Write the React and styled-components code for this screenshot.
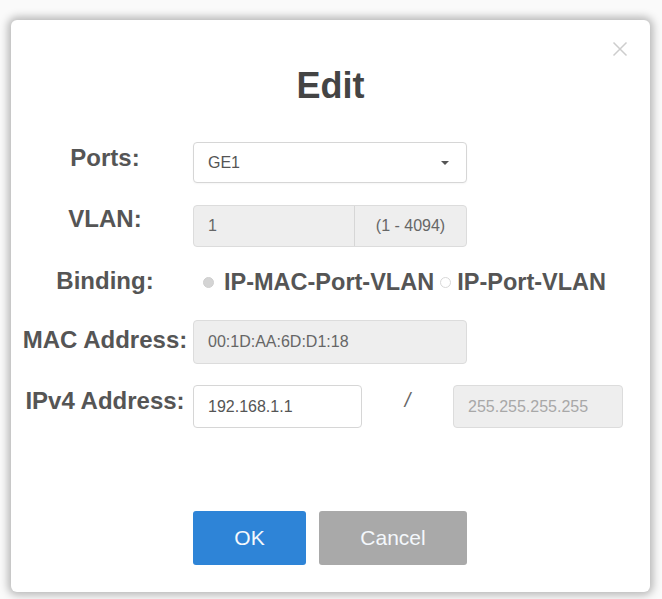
import React from "react";
import styled, { createGlobalStyle } from "styled-components";

const GlobalStyle = createGlobalStyle`
  html, body { margin: 0; padding: 0; }
  body {
    background: #fafafa;
    font-family: "Liberation Sans", Arial, sans-serif;
  }
  * { box-sizing: border-box; }
`;

const Page = styled.div`
  width: 662px;
  height: 599px;
  padding: 20px 12px 7px 11px;
  overflow: hidden;
`;

const Modal = styled.div`
  position: relative;
  width: 639px;
  height: 572px;
  background: #fff;
  border-radius: 6px;
  box-shadow: 0 0 9px 3px rgba(0, 0, 0, 0.28);
  display: flex;
  flex-direction: column;
`;

const Close = styled.button`
  position: absolute;
  top: 20px;
  right: 21px;
  width: 18px;
  height: 18px;
  padding: 0;
  border: none;
  background: transparent;
  display: flex;
  align-items: center;
  justify-content: center;
`;

const Title = styled.h1`
  margin: 46px 0 0;
  text-align: center;
  font-size: 36px;
  line-height: 40px;
  font-weight: 700;
  color: #444;
`;

const Form = styled.div`
  display: flex;
  flex-direction: column;
  margin-top: 36px;
`;

const Row = styled.div`
  display: flex;
  align-items: center;
  height: ${(p) => p.$h}px;
  margin-top: ${(p) => p.$mt || 0}px;
`;

const Label = styled.div`
  width: 168px;
  margin-left: 10px;
  margin-right: 4px;
  flex: none;
  text-align: center;
  white-space: nowrap;
  font-size: 24px;
  font-weight: 700;
  color: #555;
  padding-bottom: ${(p) => p.$up ?? 10}px;
`;

const Field = styled.div`
  width: ${(p) => p.$w}px;
  height: 100%;
  border: 1px solid ${(p) => (p.$disabled ? "#dcdcdc" : "#d6d6d6")};
  border-radius: 4px;
  background: ${(p) => (p.$disabled ? "#eeeeee" : "#fff")};
  color: ${(p) => p.$color || "#555"};
  font-size: 16px;
  display: flex;
  align-items: center;
  padding: 0 13px 0 14px;
  white-space: nowrap;
  overflow: hidden;
`;

const SelectBox = styled(Field)`
  justify-content: space-between;
  padding-right: 17px;
  box-shadow: 0 1px 2px rgba(0, 0, 0, 0.04);
`;

const Caret = styled.span`
  width: 0;
  height: 0;
  border-left: 4px solid transparent;
  border-right: 4px solid transparent;
  border-top: 4px solid #555;
`;

const Group = styled.div`
  display: flex;
  width: 274px;
  height: 100%;
  border: 1px solid #dcdcdc;
  border-radius: 4px;
  background: #eeeeee;
  overflow: hidden;
`;

const GroupInput = styled.div`
  flex: 1;
  display: flex;
  align-items: center;
  padding-left: 14px;
  font-size: 16px;
  color: #666;
`;

const Addon = styled.div`
  width: 112px;
  border-left: 1px solid #d6d6d6;
  display: flex;
  align-items: center;
  justify-content: center;
  font-size: 16px;
  color: #666;
`;

const Options = styled.div`
  display: flex;
  align-items: center;
  margin-left: 10px;
`;

const Radio = styled.span`
  width: 11px;
  height: 11px;
  border-radius: 50%;
  flex: none;
  border: 1px solid ${(p) => (p.$checked ? "#cfcfcf" : "#d8d8d8")};
  background: ${(p) => (p.$checked ? "#d4d4d4" : "#fff")};
  margin-left: ${(p) => p.$ml || 0}px;
  margin-right: ${(p) => p.$mr || 6}px;
`;

const OptionText = styled.span`
  font-size: 23.5px;
  font-weight: 700;
  color: #555;
  white-space: nowrap;
`;

const Slash = styled.div`
  width: 91px;
  text-align: center;
  font-size: 20px;
  font-style: italic;
  color: #666;
  padding-bottom: 12px;
`;

const Footer = styled.div`
  display: flex;
  gap: 13px;
  margin-top: 83px;
  padding-left: 182px;
`;

const Button = styled.button`
  width: ${(p) => p.$w}px;
  height: 54px;
  border: none;
  border-radius: 3px;
  background: ${(p) => p.$bg};
  color: #f4f8fc;
  font-family: "Liberation Sans", Arial, sans-serif;
  font-size: 21px;
  padding: 0;
`;

export default function App() {
  return (
    <>
      <GlobalStyle />
      <Page>
        <Modal>
          <Close aria-label="close">
            <svg width="18" height="18" viewBox="0 0 18 18">
              <path d="M2.5 2.5 L15.5 15.5 M15.5 2.5 L2.5 15.5" stroke="#cdcdcd" strokeWidth="1.5" fill="none" />
            </svg>
          </Close>
          <Title>Edit</Title>
          <Form>
            <Row $h={41}>
              <Label>Ports:</Label>
              <SelectBox $w={274}>
                <span>GE1</span>
                <Caret />
              </SelectBox>
            </Row>
            <Row $h={42} $mt={22}>
              <Label $up={14}>VLAN:</Label>
              <Group>
                <GroupInput>1</GroupInput>
                <Addon>(1 - 4094)</Addon>
              </Group>
            </Row>
            <Row $h={30} $mt={20}>
              <Label $up={2}>Binding:</Label>
              <Options>
                <Radio $checked $mr={10} />
                <OptionText>IP-MAC-Port-VLAN</OptionText>
                <Radio $ml={6} $mr={6} />
                <OptionText>IP-Port-VLAN</OptionText>
              </Options>
            </Row>
            <Row $h={44} $mt={23}>
              <Label $up={4}>MAC Address:</Label>
              <Field $w={274} $disabled $color="#666">00:1D:AA:6D:D1:18</Field>
            </Row>
            <Row $h={43} $mt={21}>
              <Label $up={12}>IPv4 Address:</Label>
              <Field $w={169}>192.168.1.1</Field>
              <Slash>/</Slash>
              <Field $w={170} $disabled $color="#a8a8a8">255.255.255.255</Field>
            </Row>
          </Form>
          <Footer>
            <Button $w={113} $bg="#2e84d7">OK</Button>
            <Button $w={148} $bg="#a9a9a9">Cancel</Button>
          </Footer>
        </Modal>
      </Page>
    </>
  );
}
